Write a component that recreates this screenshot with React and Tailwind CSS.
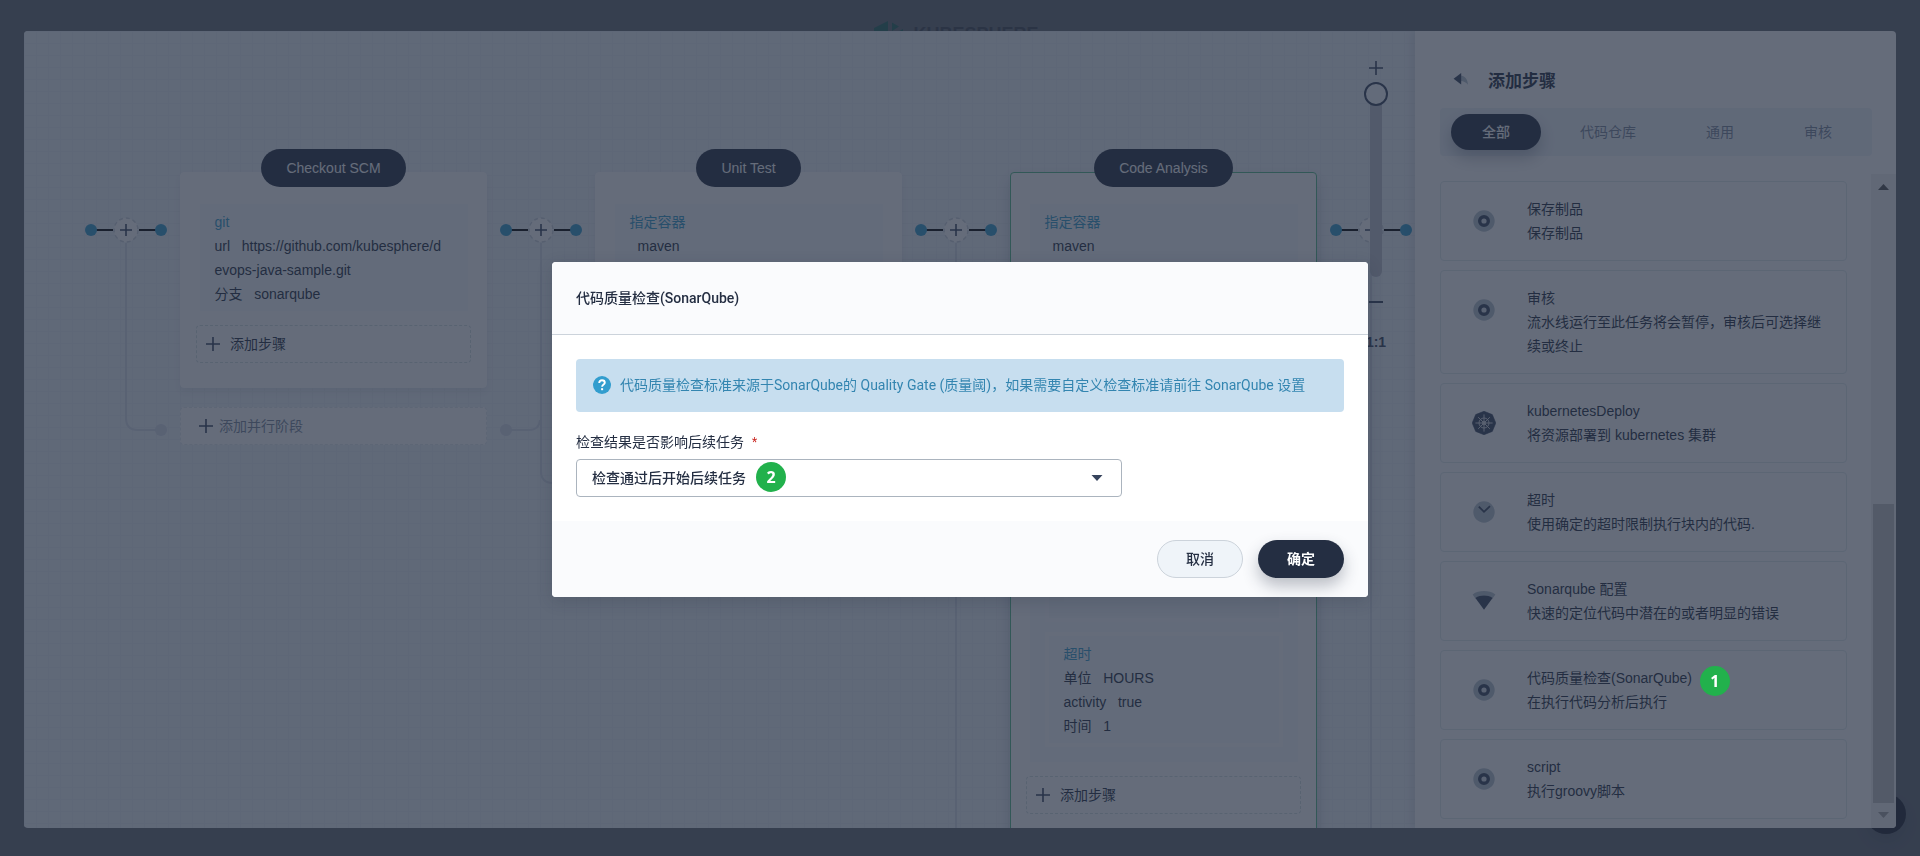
import React from "react";

const LATIN = "font-['Liberation_Sans','Noto_Sans_CJK_SC',sans-serif]";
const ROBOTO = "font-['Roboto','Noto_Sans_CJK_SC',sans-serif]";

const steps = [
  { icon: "ring", title: "保存制品", desc: "保存制品" },
  { icon: "ring", title: "审核", desc: "流水线运行至此任务将会暂停，审核后可选择继续或终止" },
  { icon: "helm", title: "kubernetesDeploy", desc: "将资源部署到 kubernetes 集群" },
  { icon: "clock", title: "超时", desc: "使用确定的超时限制执行块内的代码." },
  { icon: "wave", title: "Sonarqube 配置", desc: "快速的定位代码中潜在的或者明显的错误" },
  { icon: "ring", title: "代码质量检查(SonarQube)", desc: "在执行代码分析后执行", badge: "1" },
  { icon: "ring", title: "script", desc: "执行groovy脚本" },
];

const tabs = ["全部", "代码仓库", "通用", "审核"];

function Badge({ className, children }) {
  return (
    <span
      className={`absolute z-20 flex size-[30px] items-center justify-center rounded-full bg-[#22b14c] font-['Noto_Sans',sans-serif] text-[16px] leading-none font-bold text-white ${className}`}
    >
      {children}
    </span>
  );
}

function StepIcon({ name }) {
  if (name === "helm") {
    return (
      <svg viewBox="0 0 24 24" className="mt-3 size-6 shrink-0" aria-hidden="true">
        <path
          d="M12 0.3 20.3 3.6 23.8 12 20.3 20.4 12 23.7 3.7 20.4 0.2 12 3.7 3.6Z"
          fill="#36435c"
          stroke="#36435c"
          strokeLinejoin="round"
          strokeWidth="0.6"
        />
        <g stroke="#ffffff" fill="none" strokeWidth="1" opacity="0.8">
          <circle cx="12" cy="12" r="5" />
          <circle cx="12" cy="12" r="1.5" />
          <path d="M12 3.4V20.6M3.4 12H20.6M6.2 6.2 17.8 17.8M17.8 6.2 6.2 17.8" />
        </g>
      </svg>
    );
  }
  if (name === "clock") {
    return (
      <svg viewBox="0 0 24 24" className="mt-3 size-6 shrink-0" aria-hidden="true">
        <circle cx="12" cy="12" r="10.7" fill="#b6c2cd" />
        <path d="M6.8 6.6 12 11.8 18 6.2" fill="none" stroke="#36435c" strokeWidth="1.8" />
      </svg>
    );
  }
  if (name === "wave") {
    return (
      <svg viewBox="0 0 24 24" className="mt-3 size-6 shrink-0" aria-hidden="true">
        <path d="M0.6 5.4C7 1 17 1 23.4 5.4L20.6 9.4C15.8 6 8.2 6 3.4 9.4Z" fill="#b6c2cd" />
        <path d="M3.4 9C8.6 5.8 15.4 5.8 20.6 9L12 20.8Z" fill="#36435c" />
      </svg>
    );
  }
  return (
    <svg viewBox="0 0 24 24" className="mt-3 size-6 shrink-0" aria-hidden="true">
      <circle cx="12" cy="12" r="10.7" fill="#b6c2cd" />
      <circle cx="12" cy="12" r="4.3" fill="#d8dee5" stroke="#36435c" strokeWidth="3.4" />
    </svg>
  );
}

function Plus({ className }) {
  return (
    <svg viewBox="0 0 14 14" className={`size-[14px] shrink-0 ${className || ""}`} aria-hidden="true">
      <path d="M7 0V14M0 7H14" stroke="#36435c" strokeWidth="1.6" />
    </svg>
  );
}

function Connector({ inbound, drop }) {
  return (
    <svg width="108" height="660" viewBox="0 0 108 660" className="shrink-0" aria-hidden="true">
      <g fill="none" stroke="#d5dce8" strokeWidth="2">
        <path d={`M54 71V${drop - 12}Q54 ${drop} 66 ${drop}H84`} />
        {inbound && <path d="M24 258H42Q52 258 53 248" />}
      </g>
      <circle cx="89" cy={drop} r="6" fill="#d5dce8" />
      {inbound && <circle cx="19" cy="258" r="6" fill="#d5dce8" />}
      <path d="M24 58H41M67 58H84" stroke="#000000" strokeWidth="2" />
      <circle cx="19" cy="58" r="6" fill="#329dce" />
      <circle cx="89" cy="58" r="6" fill="#329dce" />
      <circle cx="54" cy="58" r="12" fill="#ffffff" stroke="#ccd3db" strokeDasharray="4 3" strokeWidth="1.5" />
      <path d="M54 52V64M48 58H60" stroke="#36435c" strokeWidth="1.6" />
    </svg>
  );
}

function Stage({ name, selected, children }) {
  return (
    <section className="flex w-[307px] shrink-0 flex-col gap-[19px]">
      <div
        className={`flex flex-col items-center rounded-[4px] border bg-white px-[15px] pb-6 ${
          selected
            ? "border-[#55bc8a] shadow-[0_8px_16px_rgba(36,46,66,0.2)]"
            : "border-white shadow-[0_4px_8px_rgba(36,46,66,0.08)]"
        }`}
      >
        <h3 className="-mt-6 rounded-full bg-[#242e42] px-[25px] py-[7px] text-[14px] leading-6 font-normal text-white">
          {name}
        </h3>
        {children}
        <button
          type="button"
          className="mt-[14px] flex h-[38px] w-full items-center gap-[10px] rounded-[4px] border border-dashed border-[#d3dfe1] px-[9px] text-[14px] text-[#242e42]"
        >
          <Plus />
          添加步骤
        </button>
      </div>
      <button
        type="button"
        className="flex h-[38px] items-center gap-[6px] rounded-[4px] border border-dashed border-[#e3e9ef] bg-white px-[18px] text-[14px] text-[#79879c]"
      >
        <Plus />
        添加并行阶段
      </button>
    </section>
  );
}

function Task({ title, className, children }) {
  return (
    <div
      className={`mt-[17px] w-[268px] bg-[#f9fbfd] px-[15px] pt-[6px] text-[14px] leading-6 text-[#242e42] ${
        className || "pb-[5px]"
      }`}
    >
      <h4 className="font-normal text-[#329dce]">{title}</h4>
      {children}
    </div>
  );
}

function Field({ label, value }) {
  return <p className="pr-2 break-all">{`${label}\u00a0\u00a0\u00a0${value}`}</p>;
}

function ZoomControl() {
  return (
    <div className="absolute top-[30px] right-[27px] flex w-6 flex-col items-center">
      <button type="button" aria-label="放大" className="flex h-[14px] items-center">
        <Plus />
      </button>
      <input
        type="range"
        min="0"
        max="100"
        defaultValue="0"
        aria-label="缩放"
        className="mt-[7px] h-[195px] w-6 appearance-none bg-transparent [writing-mode:vertical-lr] [&::-webkit-slider-runnable-track]:mx-auto [&::-webkit-slider-runnable-track]:w-3 [&::-webkit-slider-runnable-track]:rounded-full [&::-webkit-slider-runnable-track]:bg-[#bec4ce] [&::-webkit-slider-thumb]:-ml-[6px] [&::-webkit-slider-thumb]:size-6 [&::-webkit-slider-thumb]:appearance-none [&::-webkit-slider-thumb]:rounded-full [&::-webkit-slider-thumb]:border-2 [&::-webkit-slider-thumb]:border-[#36435c] [&::-webkit-slider-thumb]:bg-[#f9fbfd]"
      />
      <button type="button" aria-label="缩小" className="mt-[17px] flex h-4 items-center">
        <span className="h-[2px] w-[14px] bg-[#36435c]" />
      </button>
      <button type="button" className="mt-5 text-[14px] leading-6 font-bold text-[#36435c]">
        1:1
      </button>
    </div>
  );
}

function Canvas() {
  return (
    <div className="relative min-w-0 flex-1 overflow-hidden bg-[#eff4f9] bg-[linear-gradient(to_right,#e8eef3_1px,transparent_1px),linear-gradient(to_bottom,#e8eef3_1px,transparent_1px)] bg-[size:12px_12px]">
      <div className="flex items-start pt-[141px] pl-12">
        <Connector drop={258} />
        <Stage name="Checkout SCM">
          <Task title="git">
            <Field label="url" value="https://github.com/kubesphere/devops-java-sample.git" />
            <Field label="分支" value="sonarqube" />
          </Task>
        </Stage>
        <Connector inbound drop={311} />
        <Stage name="Unit Test">
          <Task title="指定容器" className="h-[160px]">
            <p className="pl-2">maven</p>
          </Task>
        </Stage>
        <Connector drop={720} />
        <Stage name="Code Analysis" selected>
          <Task title="指定容器" className="pb-[15px]">
            <p className="pl-2">maven</p>
            <div className="mt-[6px] h-[358px] border-4 border-white/60 bg-[#f5f8fb] px-[15px] pt-[15px] pb-4">
              <div className="h-full border-4 border-white/60 bg-[#eff4f9]" />
            </div>
            <div className="mt-[10px] border-4 border-white/60 px-[15px] pt-[6px] pb-[5px]">
              <h5 className="font-normal text-[#329dce]">超时</h5>
              <Field label="单位" value="HOURS" />
              <Field label="activity" value="true" />
              <Field label="时间" value="1" />
            </div>
          </Task>
        </Stage>
        <Connector drop={720} />
      </div>
      <ZoomControl />
    </div>
  );
}

function Sidebar() {
  return (
    <aside className="relative flex w-[481px] shrink-0 flex-col bg-white shadow-[-4px_0_8px_rgba(36,46,66,0.1)]">
      <header className="flex items-center gap-4 px-[33px] pt-[38px] pb-[14px]">
        <button type="button" aria-label="返回" className="size-6">
          <svg viewBox="0 0 24 24" className="size-6" aria-hidden="true">
            <path d="M12.5 5.6C16.6 5.8 19.6 9 20 14.8 17.8 12.2 15.6 11.1 12.5 11Z" fill="#b6c2cd" />
            <path d="M13.2 3V14.4L5.6 8.7Z" fill="#36435c" />
          </svg>
        </button>
        <h2 className="text-[17px] leading-[25px] font-bold text-[#242e42]">添加步骤</h2>
      </header>
      <div role="tablist" className="mr-6 ml-[25px] flex h-12 items-center gap-2 rounded-[4px] bg-[#eff4f9] pl-[11px]">
        {tabs.map((tab, i) => (
          <button
            key={tab}
            type="button"
            role="tab"
            aria-selected={i === 0}
            className={`h-9 rounded-full px-[31px] text-[14px] ${
              i === 0
                ? "bg-[#242e42] font-medium text-white shadow-[0_8px_16px_rgba(36,46,66,0.3)]"
                : "text-[#79879c]"
            }`}
          >
            {tab}
          </button>
        ))}
      </div>
      <div className="mt-[18px] flex min-h-0 flex-1">
        <ul className="mr-6 ml-[25px] flex min-w-0 flex-1 flex-col gap-[9px] pt-[7px]">
          {steps.map((step, i) => (
            <li
              key={i}
              className="flex items-start gap-[31px] rounded-[4px] border border-[#e0e9ec] py-[15px] pr-4 pl-[31px] text-[14px] leading-6 text-[#242e42]"
            >
              <StepIcon name={step.icon} />
              <div className="min-w-0 flex-1">
                <h3 className="relative w-fit font-normal">
                  {step.title}
                  {step.badge && <Badge className="top-0 left-full ml-2">{step.badge}</Badge>}
                </h3>
                <p>{step.desc}</p>
              </div>
            </li>
          ))}
        </ul>
        <div className="flex w-[25px] shrink-0 flex-col items-center bg-[#f1f1f1]" aria-hidden="true">
          <svg viewBox="0 0 25 25" className="size-[25px]">
            <path d="M7 16H18L12.5 10Z" fill="#505050" />
          </svg>
          <div className="min-h-[304px] flex-1" />
          <div className="h-[299px] w-[21px] bg-[#c1c1c1]" />
          <svg viewBox="0 0 25 25" className="size-[25px]">
            <path d="M7 9H18L12.5 15Z" fill="#a3a3a3" />
          </svg>
        </div>
      </div>
    </aside>
  );
}

function Dialog() {
  return (
    <div className={`fixed inset-0 z-30 flex items-center justify-center pt-[3px] ${ROBOTO}`}>
      <form
        role="dialog"
        aria-labelledby="dialog-title"
        className="w-[816px] overflow-hidden rounded-[4px] bg-white text-[14px] leading-6 text-[#242e42] shadow-[0_4px_16px_rgba(36,46,66,0.2)]"
      >
        <header className="border-b border-[#ccd3db] bg-[#fafbfd] p-6">
          <h2 id="dialog-title" className="font-medium">
            代码质量检查(SonarQube)
          </h2>
        </header>
        <div className="p-6">
          <div className="flex items-center gap-[9px] rounded-[4px] bg-[#c7deef] px-[17px] pt-[14px] pb-[15px] text-[#3385b0]">
            <svg viewBox="0 0 18 18" className="size-[18px] shrink-0" aria-hidden="true">
              <circle cx="9" cy="9" r="9" fill="#329dce" />
              <path
                d="M6.2 7C6.2 5.2 7.4 4.2 9 4.2S11.8 5.2 11.8 6.7C11.8 8.5 9.1 8.5 9.1 10.8"
                fill="none"
                stroke="#ffffff"
                strokeWidth="1.9"
              />
              <rect x="8.1" y="12.2" width="2" height="2" fill="#ffffff" />
            </svg>
            <p>代码质量检查标准来源于SonarQube的 Quality Gate (质量阈)，如果需要自定义检查标准请前往 SonarQube 设置</p>
          </div>
          <label htmlFor="check-result" className="mt-[18px] mb-[5px] flex gap-2">
            检查结果是否影响后续任务
            <span className="text-[12px] text-[#ca2621]">*</span>
          </label>
          <div className="relative w-[546px]">
            <select
              id="check-result"
              className="block h-[38px] w-full appearance-none rounded-[4px] border border-[#abb4be] bg-white px-[15px] text-[14px] font-medium text-[#242e42]"
            >
              <option>检查通过后开始后续任务</option>
            </select>
            <svg
              viewBox="0 0 12 6"
              className="pointer-events-none absolute top-4 right-[19px] h-[6px] w-3"
              aria-hidden="true"
            >
              <path d="M0.5 0H11.5L6 6Z" fill="#36435c" />
            </svg>
            <Badge className="top-[3px] left-[180px]">2</Badge>
          </div>
        </div>
        <footer className="flex justify-end gap-[15px] bg-[#fafbfd] px-6 py-[19px]">
          <button
            type="button"
            className="h-[38px] w-[86px] rounded-full border border-[#ccd3db] bg-[#eff4f9] font-medium"
          >
            取消
          </button>
          <button
            type="submit"
            className="h-[38px] w-[86px] rounded-full bg-[#242e42] font-bold text-white shadow-[0_8px_16px_rgba(36,46,66,0.3)]"
          >
            确定
          </button>
        </footer>
      </form>
    </div>
  );
}

export default function App() {
  return (
    <div className={`h-screen overflow-hidden bg-[#636971] ${LATIN}`}>
      <div className="flex h-0 justify-center gap-2 pt-5 pr-2" aria-hidden="true">
        <svg viewBox="0 0 32 32" className="size-8 shrink-0">
          <path d="M1 8 15 1V16L1 24Z" fill="#24645a" />
          <path d="M19 2.5 26 6.5 19 11Z" fill="#24645a" />
          <path d="M30 9V24L21 14Z" fill="#24645a" />
        </svg>
        <span className="text-[18px] leading-7 font-bold text-[#3f434e]">KUBESPHERE</span>
      </div>
      <div className="absolute right-[14px] bottom-[22px] size-10 rounded-full bg-[#1c202c] shadow-[0_8px_16px_rgba(36,46,66,0.2)]" />
      <main className="absolute inset-0 px-6 pt-[31px] pb-7">
        <div className="flex h-full overflow-hidden rounded-[4px]">
          <Canvas />
          <Sidebar />
        </div>
      </main>
      <div className="fixed inset-0 z-10 bg-[#242e42]/70" />
      <Dialog />
    </div>
  );
}
